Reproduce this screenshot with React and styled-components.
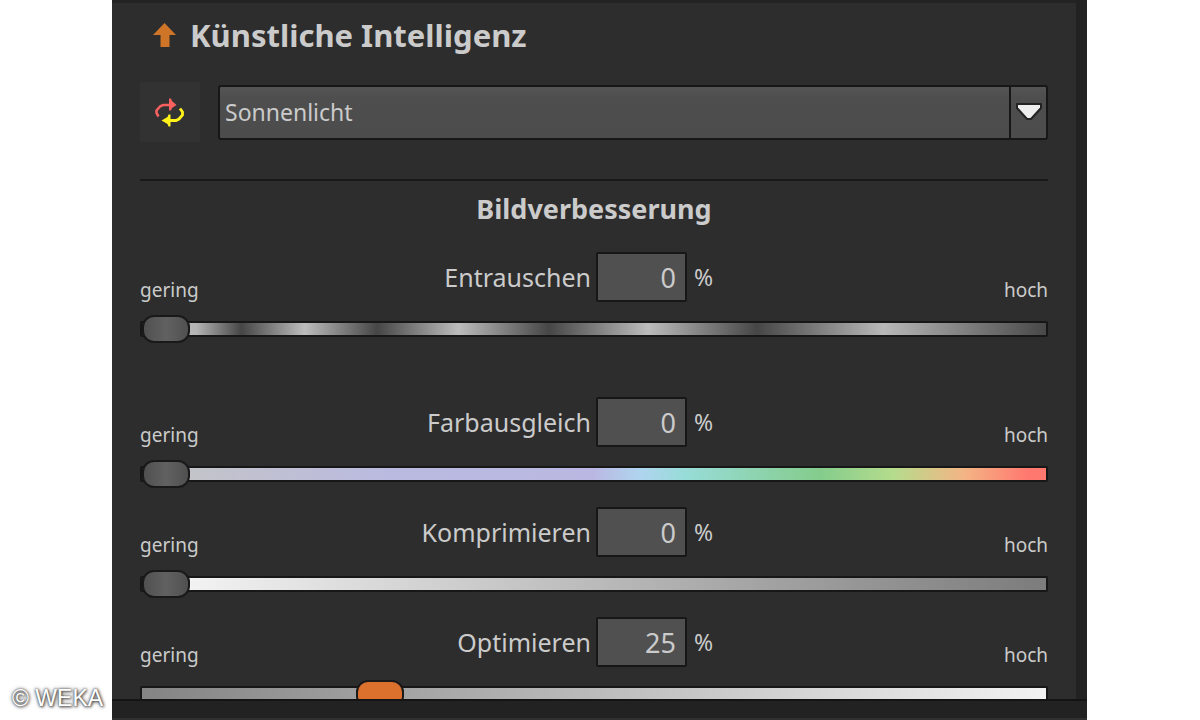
import React, { useState } from "react";
import styled, { createGlobalStyle } from "styled-components";

const GlobalStyle = createGlobalStyle`
  * { box-sizing: border-box; }

  body {
    margin: 0;
    background: #fff;
    font-family: "Noto Sans", "Open Sans", sans-serif;
    color: #cbcbcb;
  }

  button, input, select { font: inherit; color: inherit; }
`;

const Page = styled.div`
  display: grid;
  grid-template-columns: 112px minmax(0, 1fr) 113px;
  height: 100vh;
`;

const Credit = styled.small`
  align-self: end;
  padding: 0 0 8px 12px;
  font-family: "Liberation Sans", Arial, sans-serif;
  font-size: 23px;
  line-height: 28px;
  white-space: nowrap;
  color: #fff;
  text-shadow: 0 0 2px #444, 1px 1px 3px #555, 0 0 4px #777;
`;

const Window = styled.main`
  display: flex;
  flex-direction: column;
  min-width: 0;
  min-height: 0;
  background: #222;
`;

const Panel = styled.section`
  flex: 1;
  min-height: 0;
  overflow: hidden;
  margin-right: 11px;
  padding: 12px 28px 0;
  background: #2d2d2d;
  border-top: 3px solid #232323;
`;

const StatusBar = styled.footer`
  flex: none;
  height: 21px;
  border-top: 2px solid #141414;
  border-bottom: 2px solid #303030;
`;

const Header = styled.header`
  display: flex;
  align-items: center;
  gap: 13px;
  padding-left: 12px;
  height: 40px;
`;

const Title = styled.h1`
  margin: 0;
  font-size: 31px;
  line-height: 40px;
  font-weight: 700;
  white-space: nowrap;
`;

const PresetRow = styled.div`
  display: flex;
  align-items: center;
  gap: 18px;
  margin-top: 27px;
`;

const IconButton = styled.button`
  display: flex;
  align-items: center;
  justify-content: center;
  width: 60px;
  height: 60px;
  padding: 0;
  border: none;
  background: #323232;
  cursor: pointer;
`;

const SelectBox = styled.div`
  flex: 1;
  display: grid;
  grid-template-columns: minmax(0, 1fr) 37px;
  height: 55px;
  border: 2px solid #171717;
  border-radius: 3px;
  background: linear-gradient(#555, #4e4e4e 20%, #4c4c4c);
`;

const Select = styled.select`
  grid-area: 1 / 1 / 2 / 3;
  appearance: none;
  padding: 0 44px 0 5px;
  border: none;
  outline: none;
  background: transparent;
  font-size: 23px;

  option { background: #4e4e4e; }
`;

const SelectArrow = styled.span`
  grid-area: 1 / 2 / 2 / 3;
  display: flex;
  align-items: center;
  justify-content: center;
  border-left: 2px solid #171717;
  pointer-events: none;
`;

const Divider = styled.hr`
  margin: 37px 0 0;
  border: none;
  border-top: 2px solid #191919;
`;

const SectionTitle = styled.h2`
  margin: 8px 0 23px;
  font-size: 27px;
  line-height: 40px;
  font-weight: 700;
  text-align: center;
`;

const Control = styled.div`
  margin-bottom: ${({ $spaced }) => ($spaced ? 54 : 19)}px;
`;

const ControlHead = styled.div`
  display: grid;
  grid-template-columns: 50% 91px minmax(0, 1fr);
  column-gap: 2px;
  align-items: center;
  height: 50px;
`;

const Side = styled.div`
  display: flex;
  align-items: center;
  justify-content: space-between;
  height: 50px;
  padding: ${({ $left }) => ($left ? "0 3px 0 0" : "0 0 0 5px")};
`;

const Label = styled.label`
  font-size: 25px;
  line-height: 40px;
`;

const Unit = styled.span`
  font-size: 23px;
`;

const Limit = styled.span`
  align-self: flex-end;
  font-size: 19px;
  line-height: 24px;
`;

const ValueInput = styled.input`
  width: 100%;
  height: 50px;
  padding: 0 9px;
  border: 2px solid #171717;
  border-radius: 2px;
  outline: none;
  background: #505050;
  font-size: 27px;
  text-align: right;
`;

const thumb = ({ $active }) => `
  width: 48px;
  height: 28px;
  margin-top: -8px;
  border: 2px solid #191919;
  border-radius: 12px;
  background: ${$active ? "#dc712e" : "linear-gradient(90deg, #505050, #616161 50%, #505050)"};
`;

const Slider = styled.input`
  display: block;
  appearance: none;
  width: 100%;
  height: 28px;
  margin: 13px 0 0;
  background: transparent;
  cursor: pointer;

  &::-webkit-slider-runnable-track {
    height: 16px;
    border: 2px solid #171717;
    border-radius: 2px;
    background: ${({ $track }) => $track};
  }

  &::-webkit-slider-thumb {
    appearance: none;
    ${thumb}
  }
`;

const regler = [
  {
    id: "entrauschen",
    name: "Entrauschen",
    wert: 0,
    spaced: true,
    track:
      "linear-gradient(90deg, #2d2d2d 3%, #bbb 4%, #b4b4b4 6%, #464646 11%, #bcbcbc 18%, #464646 26%, #bcbcbc 35%, #464646 45%, #bcbcbc 56%, #464646 68%, #b8b8b8 82%, #484848)",
  },
  {
    id: "farbausgleich",
    name: "Farbausgleich",
    wert: 0,
    track:
      "linear-gradient(90deg, #2d2d2d 3%, #c4c4c8 4%, #babae0 27%, #bab8e2 50%, #b0d4f0 55%, #98dcd8 60%, #84cc8c 75%, #b4dc8c 83%, #f4b484 91%, #ff7870 98%)",
  },
  {
    id: "komprimieren",
    name: "Komprimieren",
    wert: 0,
    track: "linear-gradient(90deg, #2d2d2d 3%, #f4f4f4 4%, #7c7c7c)",
  },
  {
    id: "optimieren",
    name: "Optimieren",
    wert: 25,
    track: "linear-gradient(90deg, #848484, #f2f2f2)",
  },
];

function ArrowUpIcon() {
  return (
    <svg width="25" height="24" viewBox="0 0 25 24" aria-hidden="true">
      <path d="M12.5 0 24 12h-6.500v12h-9V12H1z" fill="#cf7528" />
    </svg>
  );
}

function SwapIcon() {
  return (
    <svg width="30" height="30" viewBox="0 0 30 30" fill="none" aria-hidden="true">
      <path d="M3.500 19.500 1.500 16v-2.500L5.500 9l3-1H15" stroke="#f66160" strokeWidth="2.600" />
      <path d="M14 1.500h2l1 2.500 4.500 4-4.500 3-1 2.500h-2z" fill="#f66160" />
      <path d="M25 11.500l2.500 3.500v3L24 22l-3 1.500h-7" stroke="#fff21a" strokeWidth="2.800" />
      <path d="M15.500 17.500h-2l-1 2.500-6 3.500 6 3.500 1 2.500h2z" fill="#fff21a" />
    </svg>
  );
}

function Regler({ id, name, wert, track, spaced }) {
  const [valor, setValor] = useState(wert);

  return (
    <Control $spaced={spaced}>
      <ControlHead>
        <Side $left>
          <Limit>gering</Limit>
          <Label htmlFor={id}>{name}</Label>
        </Side>
        <ValueInput
          id={id}
          type="text"
          inputMode="numeric"
          value={valor}
          onChange={(e) => setValor(Number(e.target.value) || 0)}
        />
        <Side>
          <Unit>%</Unit>
          <Limit>hoch</Limit>
        </Side>
      </ControlHead>
      <Slider
        type="range"
        min="0"
        max="100"
        value={valor}
        aria-label={name}
        $track={track}
        $active={valor > 0}
        onChange={(e) => setValor(Number(e.target.value))}
      />
    </Control>
  );
}

function App() {
  const [preset, setPreset] = useState("Sonnenlicht");

  return (
    <>
      <GlobalStyle />
      <Page>
        <Credit>© WEKA</Credit>
        <Window>
          <Panel>
            <Header>
              <ArrowUpIcon />
              <Title>Künstliche Intelligenz</Title>
            </Header>

            <PresetRow>
              <IconButton type="button" aria-label="Zurücksetzen">
                <SwapIcon />
              </IconButton>
              <SelectBox>
                <Select aria-label="Preset" value={preset} onChange={(e) => setPreset(e.target.value)}>
                  <option value="Sonnenlicht">Sonnenlicht</option>
                </Select>
                <SelectArrow>
                  <svg width="28" height="20" viewBox="0 0 28 20" aria-hidden="true">
                    <path d="M2 2h24v4L16 17h-4L2 6z" fill="#ededed" stroke="#222" strokeWidth="2" strokeLinejoin="round" />
                  </svg>
                </SelectArrow>
              </SelectBox>
            </PresetRow>

            <Divider />
            <SectionTitle>Bildverbesserung</SectionTitle>

            {regler.map((r) => (
              <Regler key={r.id} {...r} />
            ))}
          </Panel>
          <StatusBar />
        </Window>
      </Page>
    </>
  );
}

export default App;
